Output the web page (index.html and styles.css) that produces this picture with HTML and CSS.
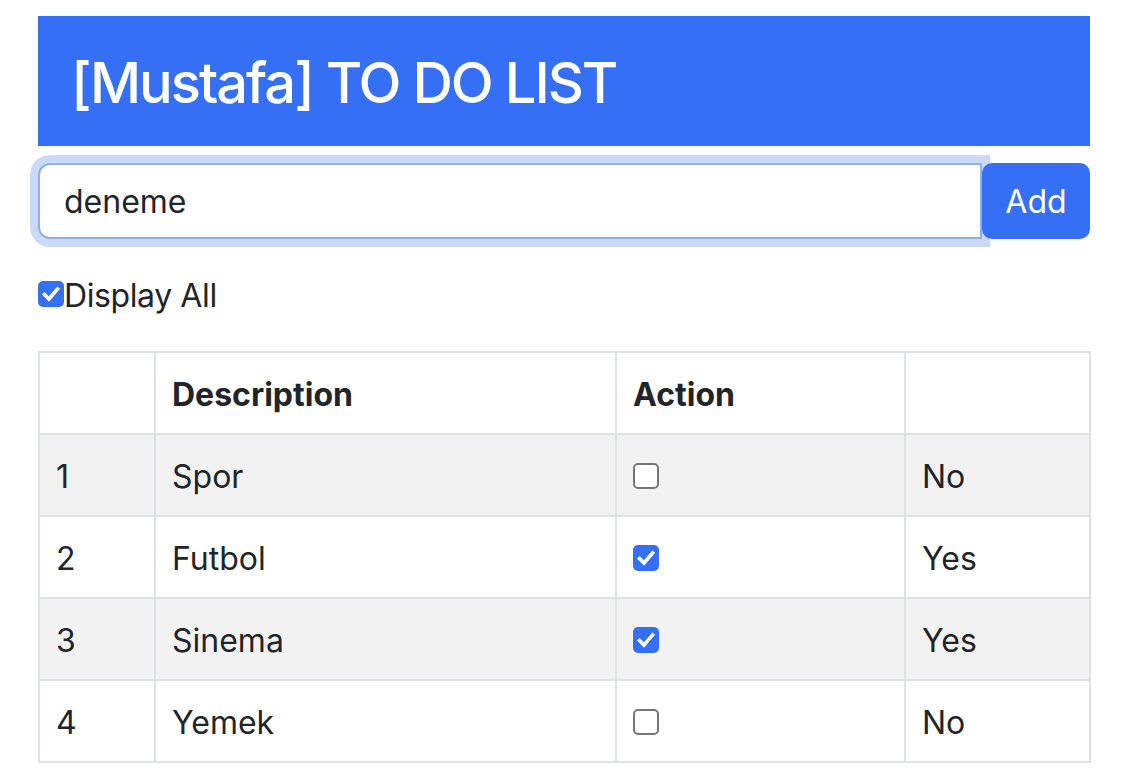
FILE: index.html
```html
<!DOCTYPE html>
<html lang="en">
<head>
<meta charset="utf-8">
<title>TO DO LIST</title>
<link rel="stylesheet" href="styles.css">
</head>
<body>
<div class="page">
  <div class="banner"><h3 class="title">[Mustafa] TO DO LIST</h3></div>
  <div class="input-group">
    <input class="field" type="text" value="deneme">
    <button class="add-btn">Add</button>
  </div>
  <label class="display-all"><input type="checkbox" class="cb" checked>Display All</label>
  <table class="todo">
    <colgroup>
      <col class="c1"><col class="c2"><col class="c3"><col class="c4">
    </colgroup>
    <thead>
      <tr><th></th><th>Description</th><th>Action</th><th></th></tr>
    </thead>
    <tbody>
      <tr class="odd"><td>1</td><td>Spor</td><td><input type="checkbox" class="cb"></td><td>No</td></tr>
      <tr><td>2</td><td>Futbol</td><td><input type="checkbox" class="cb" checked></td><td>Yes</td></tr>
      <tr class="odd"><td>3</td><td>Sinema</td><td><input type="checkbox" class="cb" checked></td><td>Yes</td></tr>
      <tr><td>4</td><td>Yemek</td><td><input type="checkbox" class="cb"></td><td>No</td></tr>
    </tbody>
  </table>
</div>
</body>
</html>
```
FILE: styles.css
```css
html, body {
  margin: 0;
  padding: 0;
  background: #fff;
}
body {
  font-family: Inter, "Liberation Sans", sans-serif;
  font-size: 32px;
  line-height: 48px;
  color: #212529;
}
.page {
  margin-left: 38px;
  width: 1052px;
  padding-top: 16px;
}
.banner {
  background: #346ff5;
  height: 130px;
  display: flex;
  align-items: center;
  padding-left: 33px;
  padding-top: 4px;
  box-sizing: border-box;
}
.title {
  margin: 0;
  color: #fff;
  font-size: 56px;
  font-weight: 500;
  line-height: 64px;
  letter-spacing: -2px;
}
.input-group {
  margin-top: 17px;
  display: flex;
  height: 76px;
}
.field {
  flex: 1;
  box-sizing: border-box;
  height: 76px;
  border: 2px solid #8eaff7;
  border-radius: 12px 0 0 12px;
  padding: 0 24px;
  font-family: inherit;
  font-size: 32px;
  color: #212529;
  outline: none;
  box-shadow: 0 0 0 8px #cbdafb;
}
.add-btn {
  position: relative;
  width: 108px;
  height: 76px;
  border: none;
  border-radius: 10px;
  background: #346ff5;
  color: #fff;
  font-family: inherit;
  font-size: 32px;
  padding: 0;
}
.display-all {
  margin-top: 33px;
  display: flex;
  align-items: center;
  height: 48px;
  letter-spacing: -0.4px;
}
.cb {
  appearance: none;
  -webkit-appearance: none;
  width: 26px;
  height: 26px;
  margin: 0;
  box-sizing: border-box;
  border: 2px solid #767676;
  border-radius: 5px;
  background: #fff;
  vertical-align: middle;
}
.cb:checked {
  border: none;
  background-color: #346ff5;
  background-image: url("data:image/svg+xml,%3Csvg xmlns='http://www.w3.org/2000/svg' viewBox='0 0 26 26'%3E%3Cpath d='M6.5 13.5l4.5 4.5 8.5-10' fill='none' stroke='%23fff' stroke-width='3.6' stroke-linecap='square'/%3E%3C/svg%3E");
  background-size: 26px 26px;
}
.display-all .cb {
  margin-top: -4px;
}
.todo {
  margin-top: 31px;
  width: 1051px;
  border-collapse: collapse;
  table-layout: fixed;
}
.c1 { width: 116px; }
.c2 { width: 461px; }
.c3 { width: 289px; }
.c4 { width: 185px; }
.todo th, .todo td {
  border: 2px solid #dee2e6;
  padding: 18px 16px 14px 16px;
  text-align: left;
  height: 48px;
}
.todo th {
  font-weight: 700;
}
.todo tr.odd td {
  background: #f2f2f2;
}
.todo td .cb {
  margin-top: -6px;
}
```
